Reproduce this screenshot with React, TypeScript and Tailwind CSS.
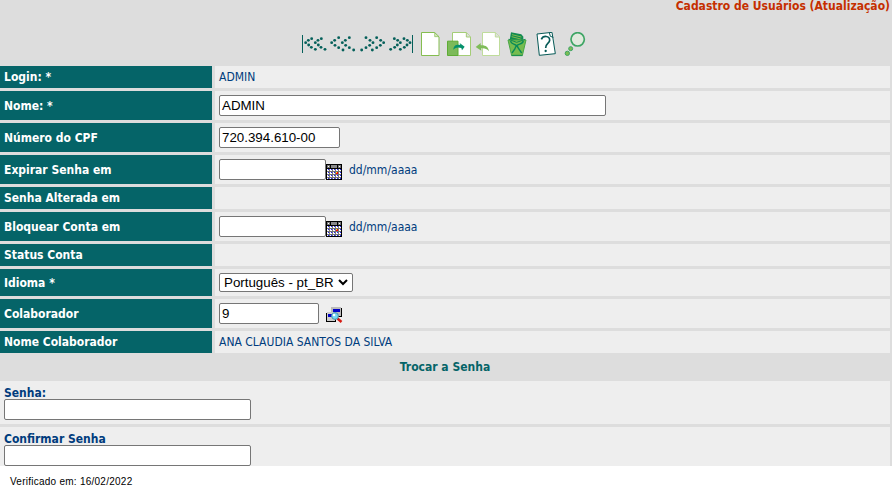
import type { ReactNode } from "react";

const leftDots: [number, number][] = [[0, 53], [8, 46], [18, 41], [9, 60], [17, 67], [29, 73]];
const wideDots: [number, number][] = [[0, 53], [9, 46], [21, 38], [10, 61], [21, 68], [34, 75]];

function Dots({ points, tips, dir }: { points: [number, number][]; tips: number[]; dir: 1 | -1 }) {
  return (
    <g fill="#05605a">
      {tips.map((tip) => points.map(([x, y]) => <circle key={`${tip}-${x}`} cx={tip + dir * x} cy={y} r="4.3" />))}
    </g>
  );
}

function Toolbar() {
  return (
    <nav className="flex h-[34px] pl-[302px]">
      <svg className="h-[25px] w-[25px]" viewBox="21 21 75 75">
        <rect x="21" y="30" width="3" height="54" fill="#05605a" />
        <Dots points={leftDots} tips={[32, 61]} dir={1} />
      </svg>
      <svg className="ml-[3px] h-[25px] w-[26px]" viewBox="105 21 78 75"><Dots points={wideDots} tips={[110, 142]} dir={1} /></svg>
      <svg className="ml-[3px] h-[25px] w-[26px]" viewBox="192 21 78 75"><Dots points={wideDots} tips={[234, 266]} dir={-1} /></svg>
      <svg className="ml-[3px] h-[25px] w-[26px]" viewBox="279 21 78 75">
        <rect x="351" y="30" width="3" height="54" fill="#05605a" />
        <Dots points={leftDots} tips={[316, 345]} dir={-1} />
      </svg>
      <svg className="ml-[6px] h-[25px] w-[20px]" viewBox="375 21 60 75" strokeWidth="3" stroke="#85bd50">
        <path d="M379.500 22.500H419L432 36V91.500H379.500Z" fill="#fff" />
        <path d="M419 23V35H432Z" fill="#d3e8bd" strokeWidth="2" />
      </svg>
      <svg className="ml-[7px] h-[25px] w-[25px]" viewBox="21 21 75 75">
        <path d="M37.500 22.500H79L91.500 36V91.500H37.500Z" fill="#fff" stroke="#a4cd76" strokeWidth="3" />
        <path d="M79 23V36H91" fill="#ddd" stroke="#a4cd76" strokeWidth="3" />
        <path d="M22.500 48.500H54V91.500H22.500Z" fill="#7cba59" stroke="#5eac35" strokeWidth="3" />
        <path d="M40 74C41 61 50 58 61 60L59 54L74 65L66 76L64 69C54 66 47 67 40 74Z" fill="#05916c" />
      </svg>
      <svg className="ml-[3px] h-[25px] w-[26px]" viewBox="105 21 78 75">
        <path d="M127.500 22.500H166L178.500 35V91.500H127.500Z" fill="#fff" stroke="#bfdc9b" strokeWidth="3" />
        <path d="M166 23V36H178" fill="#ddd" stroke="#bfdc9b" strokeWidth="3" />
        <path d="M107 66L122 54V61C137 60 145 66 147 79C140 70 132 69 123 70L124 77Z" fill="#7fbc5a" />
      </svg>
      <svg className="ml-[6px] h-[25px] w-[20px]" viewBox="201 21 60 75">
        <path d="M209 45L213 22L244 28L250 35L250 45Z" fill="#138b51" />
        <path d="M216 29L244 36M215 35L242 42" stroke="#83bc4b" strokeWidth="3" />
        <path d="M204 45H258L247 92H215Z" fill="#76bc4f" stroke="#48a647" strokeWidth="3" />
        <path d="M212 48C214 63 229 51 236 71L245 84M250 48C247 62 229 53 225 71L216 84" fill="none" stroke="#078a58" strokeWidth="4" />
        <path d="M206 43L230 52L256 43M215 91H247" fill="none" stroke="#138b51" strokeWidth="3" />
      </svg>
      <svg className="ml-[9px] h-[25px] w-[20px]" viewBox="288 21 60 75">
        <path d="M291 27L336 22L346 86L298 91Z" fill="#fff" stroke="#075a57" strokeWidth="3" />
        <path d="M328 23L331 34L340 37" fill="none" stroke="#075a57" strokeWidth="3" />
        <path d="M304 43C309 31 330 31 329 46C328 56 316 55 317 69" fill="none" stroke="#075a57" strokeWidth="5" />
        <circle cx="317" cy="78" r="3.500" fill="#075a57" />
      </svg>
      <svg className="ml-[8px] h-[25px] w-[22px]" viewBox="372 21 66 75">
        <circle cx="413" cy="43" r="20" fill="#e1e9dd" stroke="#3da564" strokeWidth="5" />
        <circle cx="392" cy="71" r="6" fill="#7dbd53" stroke="#3da564" strokeWidth="3" />
        <circle cx="382" cy="85" r="6.500" fill="#7dbd53" stroke="#3da564" strokeWidth="3" />
      </svg>
    </nav>
  );
}

function Calendar() {
  return (
    <svg width="16" height="16" viewBox="0 0 16 16" shapeRendering="crispEdges" className="mt-[9px] shrink-0">
      <rect width="16" height="16" />
      <rect x="5" y="1" width="6" height="3" fill="#888" />
      <rect x="1" y="1" width="3" height="3" fill="#777" />
      <rect x="12" y="1" width="3" height="3" fill="#777" />
      <rect x="2" y="2" width="1" height="1" fill="#fff" />
      <rect x="13" y="2" width="1" height="1" fill="#fff" />
      <rect x="1" y="5" width="14" height="10" fill="#777" />
      {[5, 8, 11, 14].map((y) =>
        [1, 4, 7, 10, 13].map((x) => (
          <g key={`${x}-${y}`}>
            <rect x={x} y={y} width="2" height={y === 14 ? 1 : 2} fill="#fff" />
            <rect x={x + 1} y={y} width="1" height="1" fill="#2424f0" />
          </g>
        )),
      )}
      <rect x="10" y="8" width="2" height="2" fill="#f00" />
      <rect x="10" y="8" width="1" height="1" fill="#ff0" />
    </svg>
  );
}

function Lookup() {
  return (
    <svg width="17" height="16" viewBox="0 0 17 16" className="ml-[7px] mt-[8px] shrink-0">
      <g shapeRendering="crispEdges">
        <path d="M5 1H16V10H5Z" fill="#000" />
        <path d="M5 0H15V9H5Z" fill="#bbb" />
        <path d="M7 2H14V5H7Z" fill="#0000c8" />
        <path d="M0 6H10V15H0Z" fill="#000" />
        <path d="M0 5H9V14H1V6Z" fill="#ccc" />
        <path d="M2 7H8V10H2Z" fill="#0000c8" />
      </g>
      <path d="M11.500 11.500L15.500 15" stroke="#d51b12" strokeWidth="2.500" />
      <circle cx="9" cy="9" r="3.400" fill="#73d7f5" stroke="#4c91aa" />
      <circle cx="8" cy="8" r="1.300" fill="#fff" />
    </svg>
  );
}

function Field({ className, value = "" }: { className: string; value?: string }) {
  return (
    <div className={`h-[21px] shrink-0 rounded-[2px] border border-[#767676] bg-white pl-[2px] font-['Liberation_Sans',Arial,sans-serif] text-[13.333px] leading-[19px] text-black [font-stretch:normal] ${className}`}>
      {value}
    </div>
  );
}

function Row({ height, label, tracking = "", children }: { height: string; label: string; tracking?: string; children?: ReactNode }) {
  return (
    <div className={`flex shrink-0 gap-[3px] ${height}`}>
      <div className={`flex w-[212px] items-center bg-[#056468] pl-1 font-bold text-white ${tracking}`}>{label}</div>
      <div className="flex w-[675px] items-start bg-[#eee] pl-1">{children}</div>
    </div>
  );
}

export default function App() {
  return (
    <div className="h-[496px] w-[892px] overflow-hidden whitespace-nowrap bg-white font-['DejaVu_Sans',sans-serif] text-xs text-[#003c7d] [font-stretch:condensed]">
      <main className="h-[466px] overflow-hidden bg-[#ddd]">
        <header className="h-[32px] pr-[2px] text-right font-bold leading-[12px] text-[#c52f00]">Cadastro de Usuários (Atualização)</header>
        <Toolbar />
        <div className="flex flex-col gap-[3px]">
          <Row height="h-[22px]" label="Login: *"><span className="leading-[23px]">ADMIN</span></Row>
          <Row height="h-[29px]" label="Nome: *"><Field className="mt-1 w-[387px]" value="ADMIN" /></Row>
          <Row height="h-[29px]" label="Número do CPF"><Field className="mt-1 w-[121px]" value="720.394.610-00" /></Row>
          <Row height="h-[29px]" label="Expirar Senha em"><Field className="mt-1 w-[107px]" /><Calendar /><span className="ml-[7px] leading-[30px]">dd/mm/aaaa</span></Row>
          <Row height="h-[22px]" label="Senha Alterada em" />
          <Row height="h-[29px]" label="Bloquear Conta em"><Field className="mt-1 w-[107px]" /><Calendar /><span className="ml-[7px] leading-[30px]">dd/mm/aaaa</span></Row>
          <Row height="h-[22px]" label="Status Conta" />
          <Row height="h-[27px]" label="Idioma *">
            <div className="mt-1 flex h-[19px] w-[134px] items-center justify-between rounded-[2px] border border-[#767676] bg-white pl-1 pr-1 font-['Liberation_Sans',Arial,sans-serif] text-[13.333px] text-black [font-stretch:normal]">
              Português - pt_BR
              <svg width="10" height="7" viewBox="0 0 10 7" fill="none" stroke="#000" strokeWidth="2"><path d="M1 1L5 5L9 1" /></svg>
            </div>
          </Row>
          <Row height="h-[29px]" label="Colaborador"><Field className="mt-1 w-[100px]" value="9" /><Lookup /></Row>
          <Row height="h-[22px]" label="Nome Colaborador"><span className="leading-[23px]">ANA CLAUDIA SANTOS DA SILVA</span></Row>
        </div>
        <h2 className="h-[28px] w-[890px] text-center font-bold leading-[29px] text-[#056468]">Trocar a Senha</h2>
        <section className="flex w-[890px] flex-col gap-[3px] font-bold">
          <div className="h-[43px] bg-[#eee] pl-1 pt-1"><div className="h-[14px] leading-[16px]">Senha:</div><Field className="w-[247px]" /></div>
          <div className="h-[39px] bg-[#eee] pl-1 pt-1"><div className="h-[14px] leading-[16px]">Confirmar Senha</div><Field className="w-[247px]" /></div>
        </section>
      </main>
      <footer className="pl-[10px] pt-[9px] font-['Liberation_Sans',Arial,sans-serif] text-[10px] leading-[14px] tracking-[0.250px] text-black [font-stretch:normal]">Verificado em: 16/02/2022</footer>
    </div>
  );
}
